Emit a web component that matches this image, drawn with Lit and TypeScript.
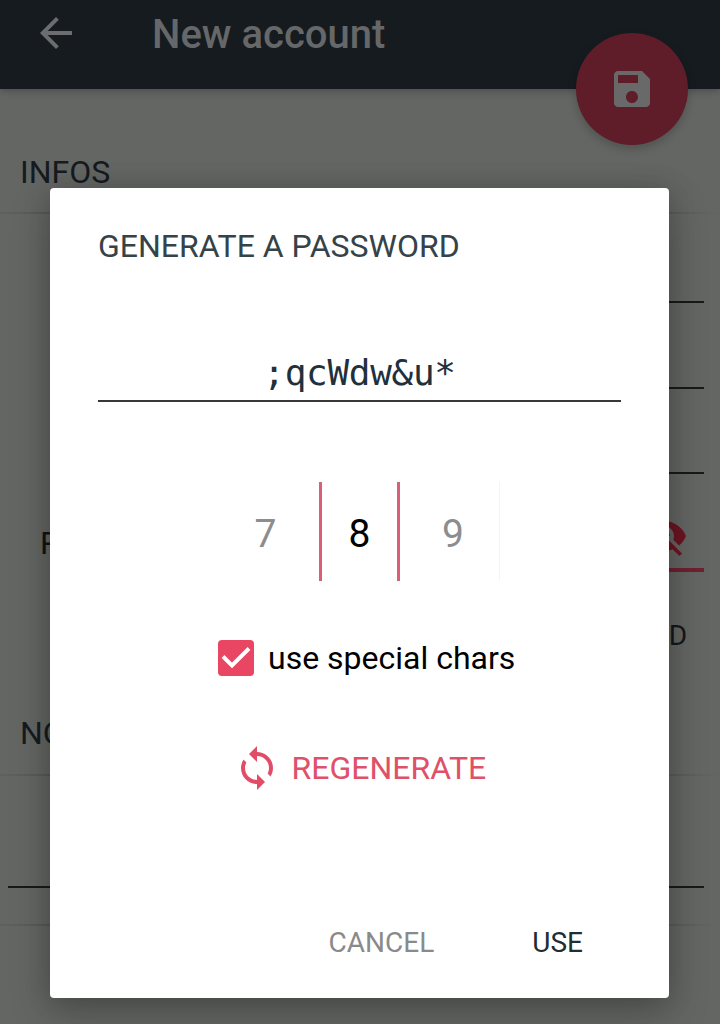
import { LitElement, html, css } from "lit";
import { customElement, property, state } from "lit/decorators.js";
import { classMap } from "lit/directives/class-map.js";

@customElement("account-form")
class AccountForm extends LitElement {
  static styles = css`
    :host { display: flex; flex-direction: column; height: 1024px; background: #646664; color: #151b1f; overflow: hidden; }
    header { position: relative; flex: none; height: 89px; background: #151b1f; box-shadow: 0 2px 8px rgba(0, 0, 0, 0.25); display: flex; align-items: flex-start; }
    .back { width: 48px; height: 48px; margin: 9px 0 0 32px; fill: #6b6d6e; }
    h1 { margin: 10px 0 0 72px; font: 500 40px/50px Roboto, sans-serif; color: #666768; white-space: nowrap; }
    .fab { position: absolute; left: 576px; top: 33px; width: 112px; height: 112px; border-radius: 50%; background: #5f1c29; box-shadow: 0 4px 10px rgba(0, 0, 0, 0.2); display: grid; place-items: center; }
    .fab svg { width: 48px; height: 48px; fill: #686968; }
    h2 { margin: 0; padding-left: 20px; font: 400 32px/40px Roboto, sans-serif; }
    .infos { margin-top: 63px; height: 60px; }
    .rule { height: 2px; flex: none; background: linear-gradient(90deg, #5f615f, #525452 12%, #525452 88%, #646664); }
    .rows { display: flex; flex-direction: column; padding: 0 16px 0 8px; }
    .field { border-bottom: 2px solid #171a1b; }
    .f1, .f2, .f3 { margin-left: 208px; }
    .f1 { height: 87px; }
    .f2 { height: 84px; }
    .f3 { height: 83px; }
    .pass { height: 98px; display: flex; justify-content: space-between; align-items: flex-start; }
    .label { padding: 48px 0 0 32px; font: 400 32px/42px Roboto, sans-serif; color: #111314; }
    .value { flex: none; width: 480px; height: 94px; border-bottom: 4px solid #6e2131; display: flex; justify-content: flex-end; }
    .value svg { width: 48px; height: 48px; margin: 38px 16px 0 0; fill: #6c1523; }
    .gen { height: 44px; margin-top: 44px; padding-right: 17px; text-align: right; font: 400 28px/40px Roboto, sans-serif; color: #151819; }
    .notes { height: 61px; margin-top: 53px; }
    .f4 { height: 110px; }
    .end { margin-top: 36px; }
  `;
  render() {
    return html`
      <header>
        <svg class="back" viewBox="0 0 24 24"><path d="M20 11H7.83l5.59-5.59L12 4l-8 8 8 8 1.41-1.41L7.83 13H20v-2z" /></svg>
        <h1>New account</h1>
        <div class="fab"><svg viewBox="0 0 24 24"><path d="M17 3H5c-1.11 0-2 .9-2 2v14c0 1.1.89 2 2 2h14c1.1 0 2-.9 2-2V7l-4-4zm-5 16c-1.66 0-3-1.34-3-3s1.34-3 3-3 3 1.34 3 3-1.34 3-3 3zm3-10H5V5h10v4z" /></svg></div>
      </header>
      <h2 class="infos">INFOS</h2>
      <div class="rule"></div>
      <div class="rows">
        <div class="field f1"></div>
        <div class="field f2"></div>
        <div class="field f3"></div>
        <div class="pass">
          <span class="label">P</span>
          <div class="value"><svg viewBox="0 0 24 24"><path d="M12 7c2.76 0 5 2.24 5 5 0 .65-.13 1.26-.36 1.83l2.92 2.92c1.51-1.26 2.7-2.89 3.43-4.75-1.73-4.39-6-7.5-11-7.5-1.4 0-2.74.25-3.98.7l2.16 2.16C10.74 7.13 11.35 7 12 7zM2 4.27l2.28 2.28.46.46C3.08 8.3 1.78 10.02 1 12c1.73 4.39 6 7.5 11 7.5 1.55 0 3.03-.3 4.38-.84l.42.42L19.73 22 21 20.73 3.27 3 2 4.27zM7.53 9.8l1.55 1.55c-.05.21-.08.43-.08.65 0 1.66 1.34 3 3 3 .22 0 .44-.03.65-.08l1.55 1.55c-.67.33-1.41.53-2.2.53-2.76 0-5-2.24-5-5 0-.79.2-1.53.53-2.2zm4.31-.78l3.15 3.15.02-.16c0-1.66-1.34-3-3-3l-.17.01z" /></svg></div>
        </div>
        <div class="gen">D</div>
      </div>
      <h2 class="notes">NOTES</h2>
      <div class="rule"></div>
      <div class="rows"><div class="field f4"></div></div>
      <div class="rule end"></div>
    `;
  }
}

@customElement("length-picker")
class LengthPicker extends LitElement {
  @property({ type: Number }) value = 8;
  static styles = css`
    :host { display: flex; height: 99px; font: 400 39px/104px Roboto, sans-serif; }
    span { text-align: center; color: #8d8d8d; height: 99px; }
    .prev { width: 107px; }
    .now { width: 75px; color: #000; border: solid #d95f78; border-width: 0 3px; }
    .next { box-sizing: border-box; width: 100px; padding-left: 7px; border-right: 1px solid #f5f5f5; }
  `;
  render() {
    return html`<span class="prev">${this.value - 1}</span><span class="now">${this.value}</span><span class="next">${this.value + 1}</span>`;
  }
}

@customElement("password-dialog")
class PasswordDialog extends LitElement {
  @state() private special = true;
  static styles = css`
    :host { display: flex; flex-direction: column; box-sizing: border-box; width: 619px; height: 809.5px; padding: 38px 48px 0; background: #fff; border-radius: 4px; box-shadow: 0 16px 40px rgba(0, 0, 0, 0.22), 0 0 28px rgba(0, 0, 0, 0.16); font: 400 32px/40px Roboto, sans-serif; color: #000; }
    h2 { margin: 0; font: inherit; color: #354349; white-space: nowrap; }
    .password { height: 58px; margin-top: 76px; border-bottom: 2px solid #35393b; text-align: center; font: 400 36px/62px "DejaVu Sans Mono", monospace; letter-spacing: -0.3px; color: #21303a; }
    length-picker { margin: 80px 0 0 114px; }
    .check { display: flex; align-items: center; height: 40px; margin: 57px 0 0 120px; white-space: nowrap; }
    .box { width: 36px; height: 36px; border-radius: 4px; margin-right: 14px; }
    .box.on { background: #e84663; }
    .box svg { display: block; width: 36px; height: 36px; fill: none; stroke: #fff; stroke-width: 3.9; }
    .regen { display: flex; align-items: center; height: 48px; margin: 66px 0 0 135px; color: #df5169; white-space: nowrap; }
    .regen svg { width: 48px; height: 48px; margin-right: 10.5px; fill: #e24c67; }
    .actions { display: flex; justify-content: flex-end; gap: 98px; margin-top: 131px; padding-right: 38px; font-size: 28px; }
    .cancel { color: #8a8a8a; }
    .use { color: #202d33; }
  `;
  render() {
    return html`
      <h2>GENERATE A PASSWORD</h2>
      <div class="password">;qcWdw&amp;u*</div>
      <length-picker .value=${8}></length-picker>
      <label class="check" @click=${() => (this.special = !this.special)}>
        <span class=${classMap({ box: true, on: this.special })}><svg viewBox="0 0 36 36"><path d="M5 16.5L14 25.5 31 8.500" /></svg></span>
        <span>use special chars</span>
      </label>
      <div class="regen">
        <svg viewBox="0 0 24 24"><path d="M12 4V1L8 5l4 4V6c3.31 0 6 2.69 6 6 0 1.01-.25 1.97-.7 2.8l1.46 1.46C19.54 15.03 20 13.57 20 12c0-4.42-3.58-8-8-8zm0 14c-3.31 0-6-2.69-6-6 0-1.01.25-1.97.7-2.8L5.24 7.74C4.46 8.97 4 10.43 4 12c0 4.42 3.58 8 8 8v3l4-4-4-4v3z" /></svg>
        <span>REGENERATE</span>
      </div>
      <div class="actions"><span class="cancel">CANCEL</span><span class="use">USE</span></div>
    `;
  }
}

@customElement("app-root")
class AppRoot extends LitElement {
  static styles = css`
    :host { display: block; position: relative; width: 720px; height: 1024px; overflow: hidden; }
    password-dialog { position: absolute; left: 50px; top: 188px; }
  `;
  render() {
    return html`<account-form></account-form><password-dialog></password-dialog>`;
  }
}
